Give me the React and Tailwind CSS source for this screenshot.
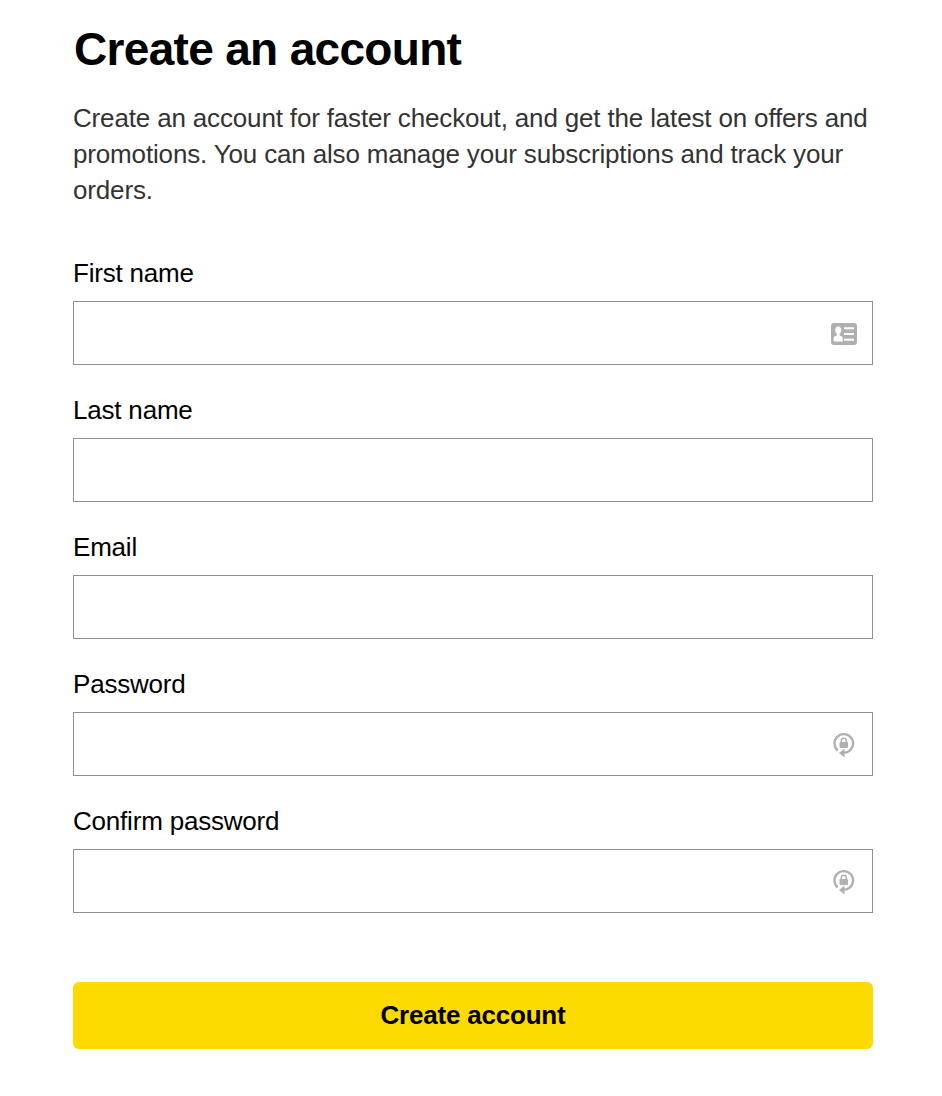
const fields = [
    { id: 'firstName', label: 'First name', type: 'text', icon: <ContactIcon /> },
    { id: 'lastName', label: 'Last name', type: 'text' },
    { id: 'email', label: 'Email', type: 'email' },
    { id: 'password', label: 'Password', type: 'password', icon: <PasswordIcon /> },
    { id: 'confirmPassword', label: 'Confirm password', type: 'password', icon: <PasswordIcon /> }
]

export default function App() {
    return (
        <main className="min-h-screen bg-white pl-[73px] pt-[20px] font-['Liberation_Sans',Arial,sans-serif] text-black">
            <div className="w-[800px]">
                <h1 className="pl-px text-[46px] leading-[58px] font-bold tracking-[-0.68px] whitespace-nowrap">
                    Create an account
                </h1>
                <p className="mt-[22px] text-[26px] leading-[36px] tracking-[-0.16px] whitespace-nowrap text-[#333]">
                    Create an account for faster checkout, and get the latest on offers and
                    <br />
                    promotions. You can also manage your subscriptions and track your
                    <br />
                    orders.
                </p>
                <form className="mt-[45px]" onSubmit={(e) => e.preventDefault()}>
                    {fields.map((field) => (
                        <Field key={field.id} {...field} />
                    ))}
                    <button
                        type="submit"
                        className="mt-[69px] h-[67px] w-full rounded-[6px] bg-[#fddb00] text-[26px] font-bold tracking-[-0.2px]"
                    >
                        Create account
                    </button>
                </form>
            </div>
        </main>
    )
}

function Field({ id, label, type, icon }) {
    return (
        <div className="mb-[25px] last-of-type:mb-0">
            <label htmlFor={id} className="block h-[48px] text-[26px] leading-[40px] tracking-[-0.2px]">
                {label}
            </label>
            <div className="flex h-[64px] items-center border border-[#909090] pr-[15px]">
                <input id={id} type={type} className="h-full min-w-0 flex-1 bg-transparent px-4 text-[26px] outline-none" />
                {icon}
            </div>
        </div>
    )
}

function ContactIcon() {
    return (
        <svg className="mt-[2px]" width="26" height="22" viewBox="0 0 26 22" fill="none">
            <rect width="26" height="22" rx="3" fill="#b0b0b0" />
            <ellipse cx="7.2" cy="7.2" rx="3" ry="3.8" fill="#fff" />
            <path d="M5.8 9.5h2.800v3c2 .6 3.200 1.300 3.200 3v3H2.600v-3c0-1.700 1.200-2.400 3.200-3z" fill="#fff" />
            <path d="M13 5.200h10M13 11h10M13 16.800h10" stroke="#fff" strokeWidth="2" />
        </svg>
    )
}

function PasswordIcon() {
    return (
        <svg className="mt-[2px] mr-[2px]" width="22" height="28" viewBox="0 0 22 28" fill="none">
            <path d="M4.800 19.500A9.300 9.300 0 1 1 16.400 19.800Q14 21.800 9.500 21.900" stroke="#b0b0b0" strokeWidth="2.300" />
            <path d="M11.500 17.500v9l-5.500-4.500z" fill="#b0b0b0" />
            <rect x="6.500" y="11" width="8.500" height="6" rx="0.8" fill="#b0b0b0" />
            <path d="M8.300 11.500V9.800a2.450 2.450 0 0 1 4.900 0v1.700" stroke="#b0b0b0" strokeWidth="1.500" />
        </svg>
    )
}
